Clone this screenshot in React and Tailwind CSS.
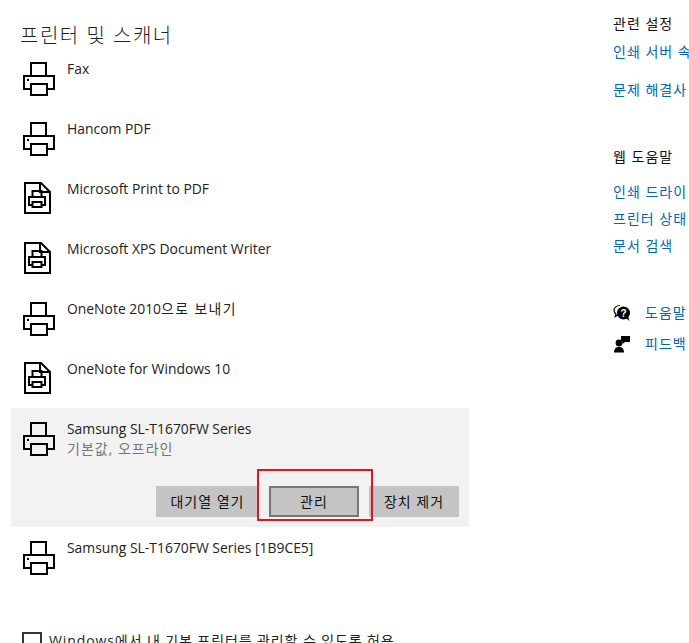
const font = "font-['Open_Sans','Noto_Sans_CJK_KR',sans-serif]";

function PrinterIcon() {
  return (
    <svg width="34" height="34" viewBox="0 0 34 34" fill="none" stroke="black" strokeWidth="2" className="shrink-0">
      <path d="M9 14V1H24V14" />
      <path d="M9 27H2V14H32V27H25" />
      <rect x="9" y="22" width="16" height="11" />
      <rect x="5" y="17" width="2" height="2" fill="black" stroke="none" />
    </svg>
  );
}

function DocIcon() {
  return (
    <svg width="34" height="34" viewBox="0 0 34 34" fill="none" stroke="black" strokeWidth="2" className="shrink-0">
      <path d="M3 1H19L28 10V31H3Z" />
      <path d="M18 1V10H28" />
      <path d="M10.5 15V9H19.5V15" />
      <path d="M10.5 23H7V15H23V23H19.5" />
      <rect x="10.5" y="20" width="9" height="5" />
    </svg>
  );
}

function HelpIcon() {
  return (
    <svg width="18" height="18" viewBox="0 0 18 18" className="shrink-0">
      <path d="M7 1.5C3.5 1.5 1 3.6 1 6.3C1 7.9 1.8 9.2 3 10L2.2 12.5L5.2 10.9" fill="none" stroke="black" strokeWidth="1.2" />
      <circle cx="10.5" cy="9" r="6.5" fill="black" />
      <path d="M13 14L16.5 17L15 12Z" fill="black" />
      <text x="10.5" y="12.5" textAnchor="middle" fontSize="10" fontWeight="700" fill="white" fontFamily="Liberation Sans">?</text>
    </svg>
  );
}

function FeedbackIcon() {
  return (
    <svg width="18" height="18" viewBox="0 0 18 18" fill="black" className="shrink-0">
      <circle cx="6" cy="8" r="3.4" />
      <path d="M1 17.5C1 13.8 3 12 6 12C9 12 11 13.8 11 17.5Z" />
      <path d="M8 1H17V7H12L9.5 9V6.5H8Z" />
    </svg>
  );
}

function Row({ icon, name }) {
  return (
    <div className="flex h-[60px] gap-[11px] pl-[11px] pt-[14px]">
      {icon === "doc" ? <DocIcon /> : <PrinterIcon />}
      <div className="-mt-[3px] text-[13.9px] leading-[20px] text-[#222]">{name}</div>
    </div>
  );
}

function ActionButton({ children, active }) {
  return (
    <button className={`h-[31px] whitespace-nowrap bg-[#c4c4c4] px-[14.5px] text-center text-[14px] tracking-[1px] text-[#111] ${active ? "w-[90px] border-2 border-[#767676]" : "min-w-[90px]"}`}>
      {children}
    </button>
  );
}

function SideLink({ children, className = "" }) {
  return <div className={`whitespace-nowrap text-[14px] leading-[20px] tracking-[1px] text-[#0067b8] ${className}`}>{children}</div>;
}

export default function App() {
  return (
    <div className={`flex h-[643px] w-[689px] overflow-hidden bg-white ${font}`}>
      <div className="w-[469px] shrink-0 pl-[11px]">
        <h1 className="h-[48px] pl-[9px] pt-[22px] text-[20px] leading-[28px] font-light tracking-[1.5px] whitespace-nowrap text-[#222]">프린터 및 스캐너</h1>
        <Row name="Fax" />
        <Row name="Hancom PDF" />
        <Row icon="doc" name="Microsoft Print to PDF" />
        <Row icon="doc" name="Microsoft XPS Document Writer" />
        <Row name={<>OneNote 2010<span className="tracking-[1.4px]">으로 보내기</span></>} />
        <Row icon="doc" name="OneNote for Windows 10" />

        <div className="relative h-[119px] bg-[#f2f2f2]">
          <div className="flex gap-[11px] pl-[11px] pt-[14px]">
            <PrinterIcon />
            <div className="-mt-[3px] text-[13.9px] leading-[20px] text-[#222]">
              Samsung SL-T1670FW Series
              <div className="text-[14px] tracking-[1px] text-[#767676]">기본값, 오프라인</div>
            </div>
          </div>
          <div className="absolute right-[10px] bottom-[10px] flex gap-[10px]">
            <ActionButton>대기열 열기</ActionButton>
            <ActionButton active>관리</ActionButton>
            <ActionButton>장치 제거</ActionButton>
          </div>
          <div className="absolute top-[61px] left-[246px] h-[52px] w-[116px] border-2 border-[#e8141c]" />
        </div>

        <Row name="Samsung SL-T1670FW Series [1B9CE5]" />
        <div className="mt-[45px] flex items-start gap-[7px] pl-[11px]">
          <div className="h-[20px] w-[20px] shrink-0 border-2 border-[#333]" />
          <div className="-mt-[1px] text-[14px] leading-[20px] tracking-[0.9px] whitespace-nowrap text-[#222]">Windows에서 내 기본 프린터를 관리할 수 있도록 허용</div>
        </div>
      </div>

      <div className="ml-[144px] shrink-0 pt-[14px]">
        <div className="text-[14px] leading-[20px] tracking-[1px] whitespace-nowrap text-[#111]">관련 설정</div>
        <SideLink className="mt-[8px]">인쇄 서버 속</SideLink>
        <SideLink className="mt-[18px]">문제 해결사</SideLink>
        <div className="mt-[47px] text-[14px] leading-[20px] tracking-[1px] whitespace-nowrap text-[#111]">웹 도움말</div>
        <SideLink className="mt-[15px]">인쇄 드라이</SideLink>
        <SideLink className="mt-[7px]">프린터 상태</SideLink>
        <SideLink className="mt-[7px]">문서 검색</SideLink>
        <div className="mt-[47px] flex items-center gap-[14px]">
          <HelpIcon />
          <SideLink>도움말</SideLink>
        </div>
        <div className="mt-[11px] flex items-center gap-[14px]">
          <FeedbackIcon />
          <SideLink>피드백</SideLink>
        </div>
      </div>
    </div>
  );
}
